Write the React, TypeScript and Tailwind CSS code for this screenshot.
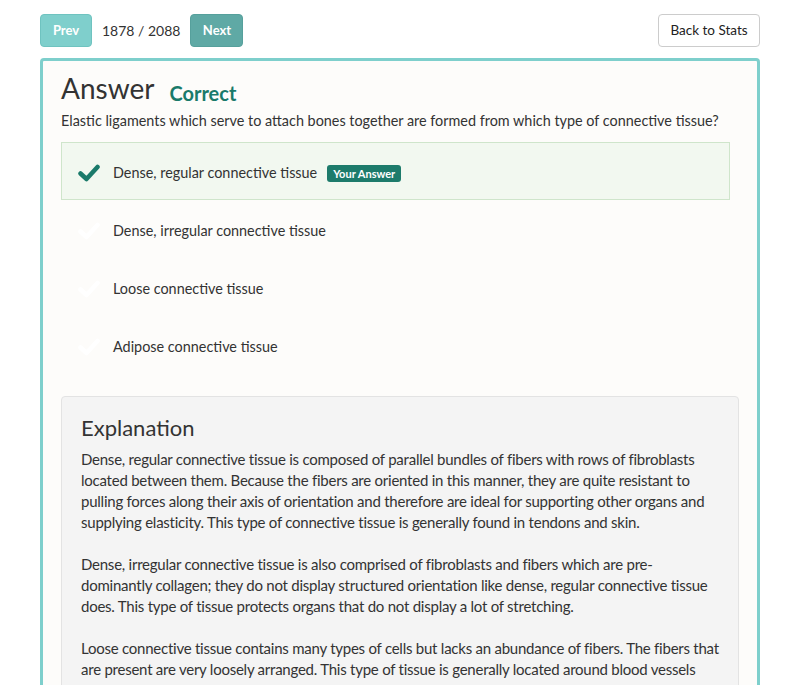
import React from "react";

const options = [
  { text: "Dense, regular connective tissue", mine: true },
  { text: "Dense, irregular connective tissue", mine: false },
  { text: "Loose connective tissue", mine: false },
  { text: "Adipose connective tissue", mine: false },
];

const paragraphs = [
  "Dense, regular connective tissue is composed of parallel bundles of fibers with rows of fibroblasts located between them. Because the fibers are oriented in this manner, they are quite resistant to pulling forces along their axis of orientation and therefore are ideal for supporting other organs and supplying elasticity. This type of connective tissue is generally found in tendons and skin.",
  "Dense, irregular connective tissue is also comprised of fibroblasts and fibers which are pre-dominantly collagen; they do not display structured orientation like dense, regular connective tissue does. This type of tissue protects organs that do not display a lot of stretching.",
  "Loose connective tissue contains many types of cells but lacks an abundance of fibers. The fibers that are present are very loosely arranged. This type of tissue is generally located around blood vessels and nerves.",
];

function Check({ color }: { color: string }) {
  return (
    <svg width="22" height="18" viewBox="0 0 22 18" className="shrink-0">
      <path d="M2.5 9.5 L8.5 15 L19.5 3" fill="none" stroke={color} strokeWidth="4.5" strokeLinecap="round" strokeLinejoin="round" />
    </svg>
  );
}

export default function App() {
  return (
    <div className="h-[685px] overflow-hidden bg-white font-['Lato',sans-serif] text-[#333]">
      <div className="px-10 pt-[14px]">
        <div className="flex items-center">
          <button className="h-[33px] w-[52px] rounded-[4px] border border-[#6fc3c0] bg-[#7fcfcc] text-[13px] font-bold text-white">
            Prev
          </button>
          <span className="mx-[10px] text-[14px] text-[#333]">1878 / 2088</span>
          <button className="h-[33px] w-[53px] rounded-[4px] border border-[#56a09c] bg-[#5fa9a5] text-[13px] font-bold text-white">
            Next
          </button>
          <button className="ml-auto h-[33px] w-[102px] rounded-[4px] border border-[#ccc] bg-white text-[13.5px] text-[#222]">
            Back to Stats
          </button>
        </div>

        <div className="mt-[11px] rounded-[4px] border-[3px] border-[#7ecfcc] bg-[#fdfcfa] px-[18px] pt-[9px]">
          <div className="flex items-end gap-[15px]">
            <h1 className="text-[28px] leading-[36px] text-[#333]">Answer</h1>
            <span className="pb-[1px] text-[20px] font-bold leading-[24px] text-[#1a7a6a]">Correct</span>
          </div>
          <p className="mt-[5px] text-[14.4px] leading-[20px] text-[#333]">
            Elastic ligaments which serve to attach bones together are formed from which type of connective tissue?
          </p>

          <div className="mt-[11px] mr-[9px]">
            {options.map((o) =>
              o.mine ? (
                <div key={o.text} className="flex h-[58px] items-center border border-[#cfe5cb] bg-[#f2f8f0] pl-[16px] pt-[4px]">
                  <Check color="#1a7a6a" />
                  <span className="ml-[13px] text-[14.4px] text-[#333]">{o.text}</span>
                  <span className="ml-[10px] rounded-[3px] bg-[#1d7b6b] px-[6px] py-[2px] text-[11px] font-bold leading-[13px] text-white">
                    Your Answer
                  </span>
                </div>
              ) : (
                <div key={o.text} className="flex h-[58px] items-center pl-[17px] pt-[4px]">
                  <Check color="#ffffff" />
                  <span className="ml-[13px] text-[14.4px] text-[#333]">{o.text}</span>
                </div>
              )
            )}
          </div>

          <div className="mt-[22px] rounded-[4px] border border-[#e3e3e3] bg-[#f4f4f4] px-[19px] pt-[16px] pb-[20px]">
            <h2 className="text-[22px] leading-[30px] text-[#333]">Explanation</h2>
            <div className="mt-[6px] space-y-[21px] text-[15px] leading-[21px] tracking-[-0.24px] text-[#333]">
              {paragraphs.map((p) => (
                <p key={p.slice(0, 20)}>{p}</p>
              ))}
            </div>
          </div>
        </div>
      </div>
    </div>
  );
}
